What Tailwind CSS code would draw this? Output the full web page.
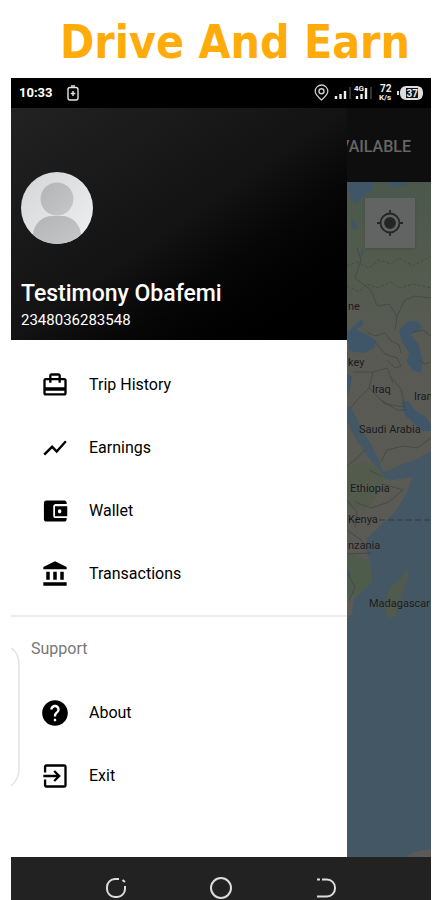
<!DOCTYPE html>
<html lang="en">
<head>
  <meta charset="UTF-8">
  <meta name="viewport" content="width=device-width, initial-scale=1.0">
  <title>Drive And Earn</title>
  <script src="https://cdn.jsdelivr.net/npm/@tailwindcss/browser@4"></script>
</head>
<body class="bg-white h-screen overflow-hidden flex flex-col pl-[11px] pr-2 font-['Roboto',sans-serif]">
  <h1 class="h-[78px] shrink-0 pt-4 pl-7 text-center text-[46px] leading-[52px] font-bold text-[#ffab0a] font-['DejaVu_Sans_Condensed','Open_Sans',sans-serif] whitespace-nowrap">Drive And Earn</h1>

  <div class="shrink-0 bg-black">
    <!-- Status bar -->
    <header class="h-[30px] flex items-center px-2 text-white">
      <span class="text-[13px] font-bold">10:33</span>
      <svg class="ml-3 w-4 h-4" viewBox="0 0 16 16" fill="none" stroke="#e5e5e5" stroke-width="1.4">
        <rect x="3" y="2.5" width="10" height="12.5" rx="2"/>
        <path d="M6 1h4M8 6v5M5.700 8.500h4.600"/>
      </svg>
      <svg class="ml-auto w-[110px] h-5" viewBox="0 0 110 20" fill="none">
        <path d="M8.500 17C5 14 2.200 11.500 2.200 8.300a6.300 6.300 0 0 1 12.600 0c0 3.200-2.800 5.700-6.300 8.700z" stroke="#ccc" stroke-width="1.300"/>
        <circle cx="8.500" cy="8.300" r="2.500" stroke="#ccc" stroke-width="1.400"/>
        <path d="M23 16v-3M27.500 16v-5M32 16V8" stroke="#eee" stroke-width="2.400"/>
        <path d="M37 16V4" stroke="#333" stroke-width="2"/>
        <path d="M44 16v-3M48.500 16v-5M53 16V5" stroke="#eee" stroke-width="2.400"/>
        <path d="M58 16V4" stroke="#333" stroke-width="2"/>
        <g fill="#eee" font-family="Roboto, sans-serif" font-weight="bold">
          <text x="41" y="8" font-size="8">4G</text>
          <text x="67" y="9" font-size="10">72</text>
          <text x="66" y="17" font-size="8">K/s</text>
        </g>
        <path d="M85 8v4" stroke="#ddd" stroke-width="2"/>
        <rect x="88" y="4" width="21" height="12" rx="5" fill="#111" stroke="#ddd" stroke-width="2"/>
        <path d="M93 4h-1a4 4 0 0 0-4 4v4a4 4 0 0 0 4 4h1zM105 4h1a3 3 0 0 1 3 3v6a3 3 0 0 1-3 3h-1z" fill="#ddd"/>
        <text x="93.500" y="13.500" font-size="10" font-weight="bold" font-family="Roboto, sans-serif" fill="#eee">37</text>
      </svg>
    </header>

    <div class="flex">
      <!-- Drawer -->
      <aside class="relative w-4/5 shrink-0 bg-white">
        <div class="h-[232px] pl-[10px] pt-16 bg-linear-to-br from-[#222] via-[#131313] to-black text-white">
          <svg class="w-[72px] h-[72px]" viewBox="0 0 72 72">
            <defs>
              <linearGradient id="face" x1="0" y1="0" x2="1" y2="1">
                <stop offset="0" stop-color="#d3d5d7"/>
                <stop offset="1" stop-color="#eff0f2"/>
              </linearGradient>
              <linearGradient id="person" x1="0" y1="0" x2="1" y2="1">
                <stop offset="0" stop-color="#b2b4b6"/>
                <stop offset="1" stop-color="#c6c7c9"/>
              </linearGradient>
              <clipPath id="round"><circle cx="36" cy="36" r="36"/></clipPath>
            </defs>
            <g clip-path="url(#round)">
              <rect width="72" height="72" fill="url(#face)"/>
              <circle cx="36" cy="27" r="16.500" fill="url(#person)"/>
              <path d="M12 62c1-10 9-18 19-18h10c10 0 18 8 19 18v10H12z" fill="url(#person)"/>
            </g>
          </svg>
          <p class="mt-9 text-[23px] leading-[28px] font-medium">Testimony Obafemi</p>
          <p class="mt-[2px] text-[15px] leading-5">2348036283548</p>
        </div>

        <nav class="pt-[13px] text-base font-normal text-black">
          <a href="#" class="h-[63px] flex items-center gap-5 pl-[30px]">
            <svg class="w-7 h-7" viewBox="0 0 24 24" fill="currentColor"><path d="M17 6V4c0-1.110-.89-2-2-2H9c-1.110 0-2 .89-2 2v2H4c-1.110 0-2 .89-2 2v11c0 1.110.89 2 2 2h16c1.110 0 2-.89 2-2V8c0-1.110-.89-2-2-2h-3zM9 4h6v2H9V4zm11 15H4v-2h16v2zm0-5H4V8h3v2h2V8h6v2h2V8h3v6z"/></svg>
            Trip History
          </a>
          <a href="#" class="h-[63px] flex items-center gap-5 pl-[30px]">
            <svg class="w-7 h-7" viewBox="0 0 24 24" fill="currentColor"><path d="M3.500 18.490l6-6.010 4 4L22 6.920l-1.410-1.410-7.090 7.970-4-4L2 16.990z"/></svg>
            Earnings
          </a>
          <a href="#" class="h-[63px] flex items-center gap-5 pl-[30px]">
            <svg class="w-7 h-7" viewBox="0 0 24 24" fill="currentColor"><path d="M22 18.500v.5c0 1.100-.9 2-2 2H4.500c-1.110 0-2-.9-2-2V5c0-1.100.89-2 2-2H20c1.100 0 2 .9 2 2v1h-9.500c-1.110 0-2 .9-2 2v8c0 1.100.89 2 2 2H22zm-10-2h10.500V8H12v8.500zm4-2.500c-.83 0-1.500-.67-1.500-1.750s.67-1.750 1.500-1.750 1.500.67 1.500 1.750-.67 1.750-1.500 1.750z"/></svg>
            Wallet
          </a>
          <a href="#" class="h-[63px] flex items-center gap-5 pl-[30px]">
            <svg class="w-7 h-7" viewBox="0 0 24 24" fill="currentColor"><path d="M4.500 10v7h3v-7h-3zm6 0v7h3v-7h-3zM2 22h20v-3H2v3zm14.500-12v7h3v-7h-3zM12 1L2 6v2h20V6L12 1z"/></svg>
            Transactions
          </a>
          <hr class="mt-[10px] border-t-2 border-[#ececec]">
          <h2 class="mt-[22px] mb-[22px] pl-5 text-base leading-5 font-normal text-[#777]">Support</h2>
          <a href="#" class="h-[63px] flex items-center gap-5 pl-[30px]">
            <svg class="w-7 h-7" viewBox="0 0 24 24" fill="currentColor"><path d="M12 1C5.900 1 1 5.900 1 12s4.900 11 11 11 11-4.900 11-11S18.100 1 12 1zm1 18h-2v-2h2v2zm2.070-7.750l-.9.920C13.450 12.900 13 13.500 13 15h-2v-.5c0-1.100.45-2.100 1.170-2.830l1.240-1.260c.37-.36.59-.86.59-1.410 0-1.100-.9-2-2-2s-2 .9-2 2H8c0-2.210 1.790-4 4-4s4 1.790 4 4c0 .88-.36 1.680-.93 2.250z"/></svg>
            About
          </a>
          <a href="#" class="h-[63px] flex items-center gap-5 pl-[30px]">
            <svg class="w-7 h-7" viewBox="0 0 24 24" fill="currentColor"><path d="M10.590 15.590L12 17l5-5-5-5-1.410 1.410L13.170 11H2v2h11.170l-2.580 2.590zM20 2H4.500c-1.110 0-2 .9-2 2v5h2V4H20v16H4.500v-5h-2v5c0 1.100.89 2 2 2H20c1.100 0 2-.9 2-2V4c0-1.100-.9-2-2-2z"/></svg>
            Exit
          </a>
        </nav>
        <div class="h-[50px]"></div>

        <!-- Edge panel handle -->
        <svg class="absolute left-0 bottom-[70px] w-[10px] h-[140px]" viewBox="0 0 10 140" fill="none" stroke="#e4e4e4" stroke-width="1.500"><path d="M0 1c5 3 8 9 8 17v103c0 8-3 14-8 18"/></svg>
      </aside>

      <!-- Dimmed page behind the drawer -->
      <main class="flex-1 min-w-0 flex flex-col">
        <div class="h-[74px] shrink-0 flex items-center justify-end pt-1 pr-5 overflow-hidden bg-[#0e0e0e] text-base text-[#666] font-medium">
          <span>AVAILABLE</span>
        </div>
        <div class="relative flex-1 bg-[#435764]">
          <svg class="absolute inset-0 w-full h-full" viewBox="0 0 84 675" preserveAspectRatio="xMinYMin slice">
            <defs>
              <linearGradient id="land" x1="0" y1="0" x2="0" y2="1">
                <stop offset="0" stop-color="#4b584c"/>
                <stop offset=".2" stop-color="#535b4e"/>
                <stop offset=".4" stop-color="#5a5a54"/>
                <stop offset="1" stop-color="#5b5a56"/>
              </linearGradient>
            </defs>
            <!-- Europe, Arabia and the coast of Africa -->
            <path d="M0 0H84V269L70 277 56 282 40 289 36 290 33 280 24 262 14 248 12 240 4 226 0 224V240L10 259 24 279 34 291 36 297 46 298 65 295C62 310 54 320 48 330L30 347 20 356 18 366 23 380 25 400 17 408 7 416 5 432 0 436z" fill="url(#land)"/>
            <path d="M0 286l14-6 16 4 8 12-12 24-10 8-16-4z" fill="#525b4c"/>
            <path d="M0 372l22 6 2 22-10 10-14 6z" fill="#4d5c4b"/>
            <path d="M59 386c4 4 2 10 0 16l-10 32c-4 4-8 2-10-2-2-8 2-14 2-22 0-6 8-8 12-12z" fill="#505a4e"/>
            <path d="M58 676c6-6 14-8 26-8v8z" fill="#5b5a56"/>
            <!-- Inland water and gulfs -->
            <g fill="#3f5668">
              <path d="M0 0h27l-3 9-8 5-6 8-6-5-4-12z"/>
              <path d="M4 36l4 4 2 8-5-2zM14 66l3 4-3 6z"/>
              <path d="M0 150l6-5 9-8 2 5-8 6 8 3 12 7-2 8-10 5-15-2z"/>
              <path d="M52 148l8-8 10-1 6 6-8 5-4 3 8 10 4 18-2 10-8-2-6-9 2-10-7-10z"/>
              <path d="M0 192l5 2-2 14-3 6z"/>
              <path d="M54 220l7-1 8 10 10 6 5 8v6l-8 0-10-8-8-8z"/>
              <path d="M0 386l4 4-2 8z"/>
            </g>
            <path d="M39 0l8 6 14-4V0z" fill="#3f5668"/>
            <g fill="none" stroke="#414640" stroke-width=".8">
              <path d="M0 104l12 6 8-8 10 4 14-6 8 6 14-4 18 4" stroke-dasharray="3 2"/>
              <path d="M0 84l10-4 12 6 10-8 12 4 8-6 14 8 18-10" stroke-dasharray="3 2"/>
              <path d="M10 66l4 12-6 18 16 12 6 16 12-2 8 12M84 116l-16-2-10 4-8 16-2 14M66 150l10-2 8 6M72 178l6 4 6-2"/>
              <path d="M20 150l8 4 10-3 6 8 8 4 2 8M28 160l10 12 12 4 4 8-6 2-8-8"/>
              <path d="M6 190l20 0 14-4 4 10 2 5M26 190l-4 16-12 12-6 8M22 206l16 16 20 3-4-18-10-12"/>
              <path d="M34 280l6-12 16-4 14 2 14-10M34 218l16 10 10 0M0 284l10-8 8-8M22 288l12 6M36 302l20 6-14 12-18 6-16-6M0 348l14 10 8 8M0 372l24-1M0 318l10 12-2 16"/>
              <path d="M0 391l8 14-6 14"/>
            </g>
            <path d="M32 338H84" stroke="#303c46" stroke-width="1" stroke-dasharray="6 3"/>
            <g fill="#17191a" stroke="#626460" stroke-width=".4" paint-order="stroke" font-family="Roboto, sans-serif" font-size="11">
              <text x="1" y="128">ne</text>
              <text x="1" y="184">key</text>
              <text x="25" y="211">Iraq</text>
              <text x="67" y="218">Iran</text>
              <text x="12" y="251">Saudi Arabia</text>
              <text x="3" y="310">Ethiopia</text>
              <text x="1" y="341">Kenya</text>
              <text x="1" y="367">nzania</text>
              <text x="22" y="425">Madagascar</text>
            </g>
          </svg>
          <button type="button" aria-label="My location" class="absolute top-4 right-4 w-[50px] h-[50px] flex items-center justify-center bg-[#626464] shadow">
            <svg class="w-7 h-7" viewBox="0 0 28 28" fill="none" stroke="#252525" stroke-width="1.800">
              <circle cx="14" cy="14" r="9.500"/>
              <circle cx="14" cy="14" r="5" fill="#252525"/>
              <path d="M14 1v4M14 23v4M1 14h4M23 14h4"/>
            </svg>
          </button>
        </div>
      </main>
    </div>

    <!-- System navigation -->
    <footer class="h-[62px] flex items-center justify-center gap-20 bg-[#222]">
      <button type="button" aria-label="Recent apps">
        <svg class="w-6 h-6" viewBox="0 0 24 24" fill="none" stroke="#ddd" stroke-width="2"><path d="M14 3h-4a8 8 0 0 0-8 8v2a8 8 0 0 0 8 8h2a8 8 0 0 0 8-8v-3M17.500 4l2.500 2"/></svg>
      </button>
      <button type="button" aria-label="Home">
        <svg class="w-6 h-6" viewBox="0 0 24 24" fill="none" stroke="#ddd" stroke-width="2"><circle cx="12" cy="12" r="10"/></svg>
      </button>
      <button type="button" aria-label="Back">
        <svg class="w-6 h-6" viewBox="0 0 24 24" fill="none" stroke="#ddd" stroke-width="2"><path d="M4 3.500h3M9 3.500h5a8 8 0 0 1 8 8v1a8 8 0 0 1-8 8H4"/></svg>
      </button>
    </footer>
  </div>
</body>
</html>
